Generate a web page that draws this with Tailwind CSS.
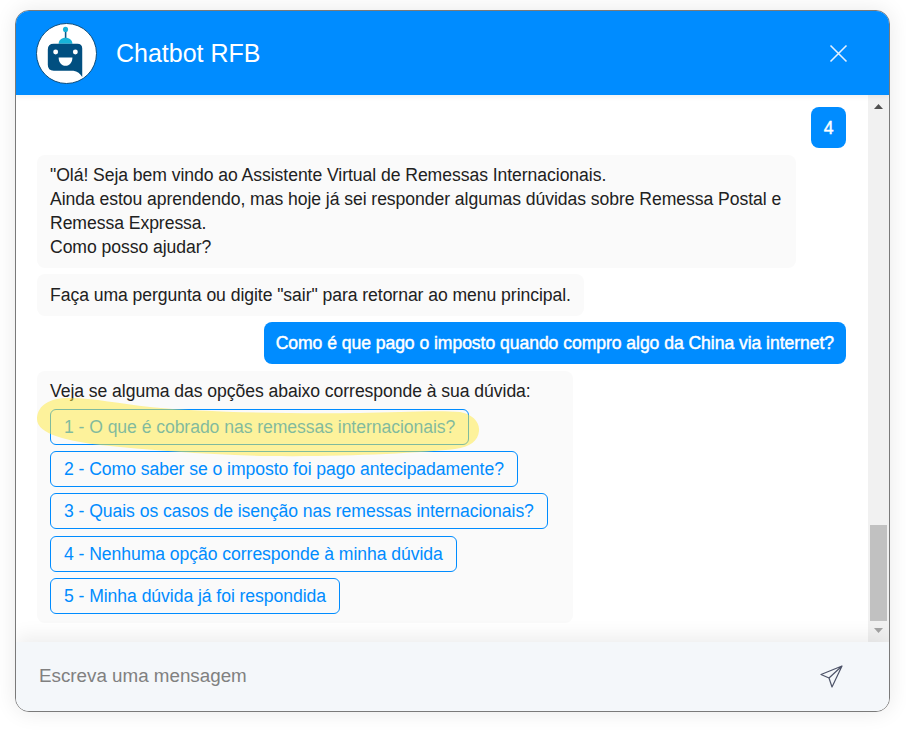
<!DOCTYPE html>
<html lang="pt-BR">
<head>
<meta charset="utf-8">
<title>Chatbot RFB</title>
<script src="https://cdn.jsdelivr.net/npm/@tailwindcss/browser@4"></script>
</head>
<body class="bg-white font-['Liberation_Sans',Arial,sans-serif]">
<div class="w-[906px] h-[735px] pt-[10px] pl-[15px]">
  <div class="relative w-[875px] h-[702px] border border-[#7a7a7a] rounded-[14px] overflow-hidden flex flex-col bg-white shadow-[0_0_22px_rgba(0,0,0,0.09)]">
    <header class="relative z-10 h-[84px] shrink-0 bg-[#008cff] flex items-center pl-[20px] pr-[41px] shadow-[0_2px_5px_rgba(0,0,0,0.06)]">
      <svg class="w-[61px] h-[61px] shrink-0" viewBox="0 0 62 62" aria-hidden="true">
        <circle cx="31" cy="31" r="30.5" fill="#fff" stroke="#0b4a78" stroke-width="1"/>
        <rect x="29.3" y="7" width="1.6" height="10" fill="#0b5c8c"/>
        <circle cx="30" cy="6.5" r="2.6" fill="#17b3d8"/>
        <path d="M23 21 C23 17.5 26 15 30 15 C34 15 37 17.5 37 21 Z" fill="#17b3d8"/>
        <path d="M18 21 H42 Q47 21 47 26 V55 Q44 49.5 38 48.5 H18 Q12 48.5 12 42.5 V27 Q12 21 18 21 Z" fill="#014f80"/>
        <circle cx="20" cy="29.5" r="2.5" fill="#fff"/>
        <circle cx="40" cy="29.5" r="2.5" fill="#fff"/>
        <path d="M23 35 H37 C37 40 34 43.5 30 43.5 C26 43.5 23 40 23 35 Z" fill="#fff"/>
      </svg>
      <h1 class="ml-[19px] text-[25px] leading-none font-normal text-white">Chatbot RFB</h1>
      <svg class="ml-auto w-[19px] h-[19px]" viewBox="0 0 19 19" fill="none" stroke="#e4f1ff" stroke-width="1.6" aria-hidden="true">
        <path d="M1.5 1.5 L17.5 17.5 M17.5 1.5 L1.5 17.5"/>
      </svg>
    </header>

    <div class="flex-1 flex min-h-0">
      <main class="flex-1 min-w-0 flex flex-col items-start pt-[12px] pl-[21px] pr-[22px] text-[17.6px] leading-[24px] tracking-[-0.06px] text-[#212121]">
        <div class="self-end h-[41px] w-[35px] flex items-center justify-center rounded-[8px] bg-[#008cff] text-white [-webkit-text-stroke:0.45px_#fff]">4</div>
        <div class="mt-[7px] w-[759px] rounded-[8px] bg-[#fafafa] px-[13px] py-[8px] h-[113px]">
          "Olá! Seja bem vindo ao Assistente Virtual de Remessas Internacionais.<br>
          Ainda estou aprendendo, mas hoje já sei responder algumas dúvidas sobre Remessa Postal e Remessa Expressa.<br>
          Como posso ajudar?
        </div>
        <div class="mt-[6px] h-[42px] rounded-[8px] bg-[#fafafa] px-[13px] py-[9px]">Faça uma pergunta ou digite "sair" para retornar ao menu principal.</div>
        <div class="mt-[6px] self-end h-[42px] rounded-[8px] bg-[#008cff] px-[12px] py-[9px] text-white [-webkit-text-stroke:0.45px_#fff]">Como é que pago o imposto quando compro algo da China via internet?</div>
        <div class="mt-[7px] h-[252px] rounded-[8px] bg-[#fafafa] pl-[13px] pr-[25px] pt-[8px] flex flex-col items-start">
          <p>Veja se alguma das opções abaixo corresponde à sua dúvida:</p>
          <div class="mt-[5.9px] flex flex-col items-start gap-[6.25px]">
            <button class="h-[36px] px-[13px] rounded-[6px] border border-[#008cff] text-[#008cff]">1 - O que é cobrado nas remessas internacionais?</button>
            <button class="h-[36px] px-[13px] rounded-[6px] border border-[#008cff] text-[#008cff]">2 - Como saber se o imposto foi pago antecipadamente?</button>
            <button class="h-[36px] px-[13px] rounded-[6px] border border-[#008cff] text-[#008cff]">3 - Quais os casos de isenção nas remessas internacionais?</button>
            <button class="h-[36px] px-[13px] rounded-[6px] border border-[#008cff] text-[#008cff]">4 - Nenhuma opção corresponde à minha dúvida</button>
            <button class="h-[36px] px-[13px] rounded-[6px] border border-[#008cff] text-[#008cff]">5 - Minha dúvida já foi respondida</button>
          </div>
        </div>
      </main>
      <div class="w-[21px] shrink-0 bg-[#f1f1f1] flex flex-col items-center">
        <svg class="mt-[9px] w-[9px] h-[5px]" viewBox="0 0 9 5" aria-hidden="true"><path d="M4.5 0 L9 5 H0 Z" fill="#505050"/></svg>
        <div class="mt-[416px] w-[17px] h-[96px] bg-[#c1c1c1]"></div>
        <svg class="mt-[7px] w-[9px] h-[5px]" viewBox="0 0 9 5" aria-hidden="true"><path d="M0 0 H9 L4.5 5 Z" fill="#a3a3a3"/></svg>
      </div>
    </div>

    <footer class="relative z-10 h-[69px] shrink-0 bg-[#f4f7fa] flex items-center pl-[23px] pr-[46px] pb-[1px] shadow-[0_-6px_18px_rgba(0,0,0,0.07)]">
      <span class="text-[18.8px] text-[#808080]">Escreva uma mensagem</span>
      <svg class="ml-auto w-[23px] h-[23px]" viewBox="0 0 23 23" fill="none" stroke="#4d5368" stroke-width="1.2" stroke-linejoin="round" aria-hidden="true">
        <path d="M22 1 L1 9.5 L9 13 L12 22 Z M22 1 L9 13"/>
      </svg>
    </footer>

    <svg class="absolute left-0 top-0 pointer-events-none z-20" width="875" height="702" viewBox="16 11 875 702" aria-hidden="true">
      <path d="M37 418 C38 405 50 398 68 398 C95 398 120 404 150 407 C200 412 280 414 360 413 C400 412 440 410 460 412 C472 414 480 422 479 431 C478 441 470 447 455 449 C420 453 340 457 270 456 C210 455 150 450 100 445 C70 441 36 435 37 418 Z" fill="#ffe93c" fill-opacity="0.5"/>
    </svg>
  </div>
</div>
</body>
</html>
